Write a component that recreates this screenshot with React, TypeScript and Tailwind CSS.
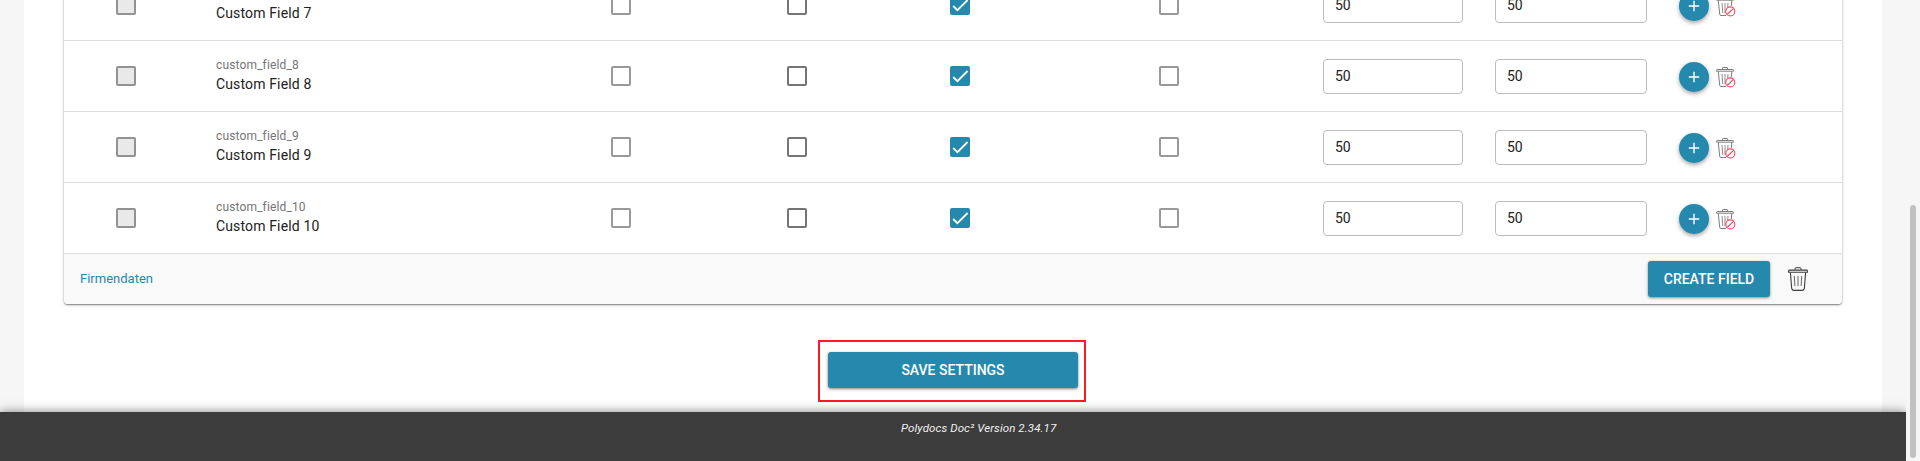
import React from "react";

type Tone = "disabled" | "light" | "dark" | "checked";

function CheckBox({ tone }: { tone: Tone }) {
  const tones: Record<Tone, string> = {
    disabled: "border-2 border-[#929292] bg-[#e9e9e9]",
    light: "border-2 border-[#999999] bg-white",
    dark: "border-2 border-[#757575] bg-white",
    checked: "bg-[#2589ae]",
  };
  return (
    <span className={"block size-5 rounded-[2px] " + tones[tone]}>
      {tone === "checked" && (
        <svg viewBox="0 0 20 20" className="size-5" fill="none" stroke="#fff" strokeWidth="1.8">
          <path d="M3.2 11 7.4 15.2 17.6 5" />
        </svg>
      )}
    </span>
  );
}

function BlockedTrash() {
  return (
    <svg width="20" height="21" viewBox="0 0 20 21" fill="none" className="ml-[7px]">
      <g stroke="#6e6e6e" strokeWidth=".9">
        <path d="M6.500 2.500V1.200q0-.7.600-.7h3.800q.6 0 .6.700V2.500" />
        <path d="M.6 4.200V3.200q0-.7.700-.7h15.400q.7 0 .7.700V4.200z" />
        <path d="M2.300 4.500 3.700 18.200q.2 1.300 1.300 1.300H10M15.800 4.500 15.300 10" />
        <path d="M6 7l.8 10M9 7v10M12 7l-.3 4" strokeWidth=".8" />
      </g>
      <g stroke="#f5465f" strokeWidth="1.100">
        <circle cx="14.300" cy="15.400" r="4.500" />
        <path d="m11.200 18.500 6.200-6.200" />
      </g>
    </svg>
  );
}

function Trash() {
  return (
    <svg width="20" height="24" viewBox="0 0 20 24" fill="none" stroke="#3c3c3c" className="ml-[18px]">
      <path d="M7 2.800V1.700Q7 .7 8 .7h4q1 0 1 1v1.100" />
      <path d="M.6 5.200V4q0-.9.9-.9h17q.9 0 .9.900v1.200z" strokeWidth="1.100" />
      <path d="m2.400 5.600 1.200 15.200q.2 2.600 2.300 2.600h8.200q2.100 0 2.300-2.600L17.600 5.600" strokeWidth="1.100" />
      <path d="m6.300 9 .6 10M10 9v10M13.700 9l-.6 10" stroke="#666" />
    </svg>
  );
}

function NumberField({ width }: { width: string }) {
  return (
    <input
      readOnly
      value="50"
      className={"h-[35px] rounded-[4px] border border-[#bdbdbd] bg-white px-[11px] text-[14px] text-[#212121] outline-none " + width}
    />
  );
}

function FieldRow({ label, name }: { label: string; name?: string }) {
  return (
    <div className="grid h-[71px] shrink-0 grid-cols-[100px_395px_176px_163px_209px_164px_172px_184px_auto] items-center border-b border-[#dedede] pl-[52px]">
      <CheckBox tone="disabled" />
      <div className="flex flex-col pb-[2px]">
        <span className="h-[18px] text-[12px] leading-[18px] tracking-[0.13px] text-[#757575]">{name}</span>
        <span className="text-[14px] leading-5 tracking-[0.14px] text-[#212121]">{label}</span>
      </div>
      <CheckBox tone="light" />
      <CheckBox tone="dark" />
      <CheckBox tone="checked" />
      <CheckBox tone="light" />
      <NumberField width="w-[140px]" />
      <NumberField width="w-[152px]" />
      <div className="flex items-center pt-[2px]">
        <button className="flex size-[30px] items-center justify-center rounded-full bg-[#2589ae] shadow-[0_2px_4px_rgba(0,0,0,0.35)]">
          <svg width="12" height="12" viewBox="0 0 12 12" stroke="#fff" strokeWidth="1.400" className="-mt-px -ml-px">
            <path d="M6 .8v10.400M.8 6h10.400" />
          </svg>
        </button>
        <BlockedTrash />
      </div>
    </div>
  );
}

export default function App() {
  return (
    <div className="flex h-[461px] w-full overflow-hidden bg-[#f6f6f6] font-['Roboto',sans-serif]">
      <div className="flex w-[1906px] flex-col overflow-hidden">
        <main className="ml-6 flex h-[412px] w-[1858px] shrink-0 flex-col bg-white">
          <section className="-mt-10 ml-10 flex h-[344px] w-[1778px] shrink-0 flex-col justify-end rounded-b-[4px] bg-white shadow-[0_1px_3px_rgba(0,0,0,0.3),0_1px_1px_rgba(0,0,0,0.3)]">
            <FieldRow label="Custom Field 7" />
            <FieldRow label="Custom Field 8" name="custom_field_8" />
            <FieldRow label="Custom Field 9" name="custom_field_9" />
            <FieldRow label="Custom Field 10" name="custom_field_10" />
            <div className="flex h-[50px] shrink-0 items-center rounded-b-[4px] bg-[#f9f9f9] pr-[34px] pl-4">
              <a className="text-[13px] text-[#2589ae]">Firmendaten</a>
              <button className="ml-auto h-9 w-[122px] rounded-[3px] bg-[#2589ae] pt-px text-[14px] font-medium text-white shadow-[0_1px_3px_rgba(0,0,0,0.45)]">
                CREATE FIELD
              </button>
              <Trash />
            </div>
          </section>
          <div className="mt-9 ml-[794px] h-[62px] w-[268px] border-2 border-[#fb1d1d] pt-[10px] pl-2">
            <button className="block h-9 w-[250px] rounded-[3px] bg-[#2589ae] pt-px text-[14px] font-medium text-white shadow-[0_1px_3px_rgba(0,0,0,0.5)]">
              SAVE SETTINGS
            </button>
          </div>
        </main>
        <footer className="relative h-[49px] shrink-0 bg-[#3c3c3c] pt-[7px] pl-[901px] text-[11.5px] leading-[18px] tracking-[0.1px] text-[#f0f0f0] italic shadow-[0_0_10px_rgba(0,0,0,0.5)]">
          Polydocs Doc² Version 2.34.17
        </footer>
      </div>
      <div className="flex-1 pt-[205px] pl-1">
        <div className="h-[253px] w-[6px] rounded-full bg-[#c1c1c1]" />
      </div>
    </div>
  );
}
